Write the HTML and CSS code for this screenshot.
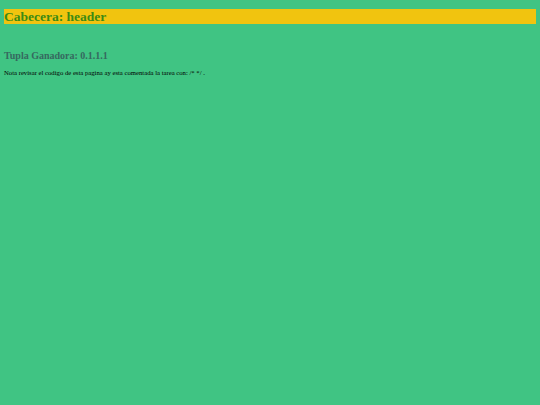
FILE: index.html
```html
<!DOCTYPE html>
<html>
<head>
  <meta charset="utf-8">
  <link rel="stylesheet" href="styles.css">
</head>
<body>

<header class="cabecera">
  <h1>Cabecera: header</h1>
</header>

<div class="contenido">
  <h3 class="tupla">Tupla Ganadora: 0.1.1.1</h3>
  <p class="nota">Nota revisar el codigo de esta pagina ay esta comentada la tarea con: /* */ .</p>
</div>

</body>
</html>
```

FILE: styles.css
```css
body {
  font-family: "Liberation Serif", serif;
  background-color: #40C483;
  margin: 0;
  padding: 9px 4px;
}

.cabecera {
  background-color: #F1C40F;
}

.cabecera h1 {
  margin: 0;
  font-size: 13.5px;
  line-height: 15px;
  color: #3C8A14;
}

.contenido {
  padding-top: 26px;
}

.tupla {
  color: #36695F;
  font-size: 10px;
  margin: 0 0 8px 0;
}

.nota {
  font-size: 6.7px;
  margin: 0;
}
```
